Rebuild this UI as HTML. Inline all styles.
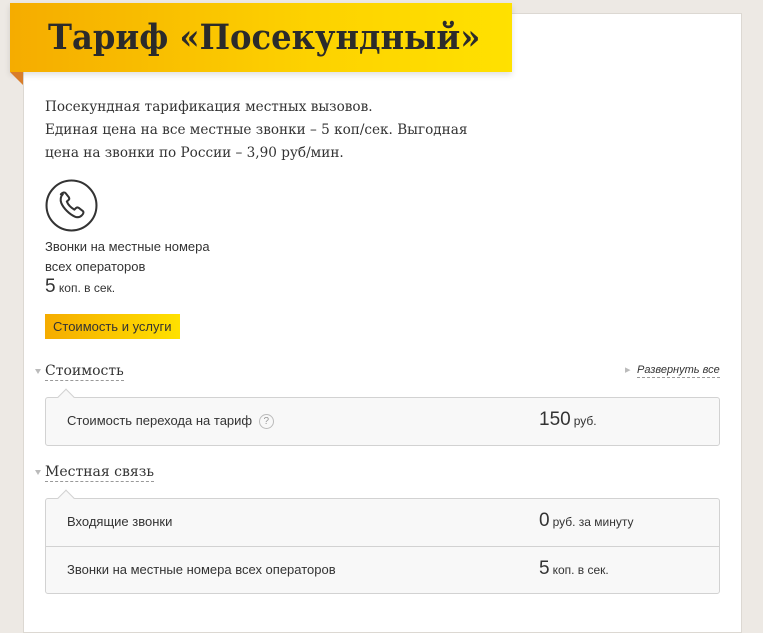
<!DOCTYPE html>
<html><head><meta charset="utf-8"><style>
*{margin:0;padding:0;box-sizing:border-box}
body{width:763px;height:610px;overflow:hidden;background:#ede9e4;font-family:"Liberation Sans",sans-serif;color:#333;position:relative}
.card{position:absolute;left:23px;top:13px;width:719px;height:620px;background:#fff;border:1px solid #dcd8d2}
.banner{position:absolute;left:10px;top:3px;width:502px;height:69px;background:linear-gradient(90deg,#f5ac00,#fdd200 60%,#ffe100);box-shadow:0 3px 6px rgba(0,0,0,.12)}
.banner h1{font-family:"DejaVu Serif","Liberation Serif",serif;font-weight:bold;font-size:35px;color:#2b2b2b;position:absolute;left:38px;top:14px;white-space:nowrap;transform:scaleX(.92);transform-origin:0 0}
.fold{position:absolute;left:10px;top:72px;width:0;height:0;border-top:13px solid #d87d2a;border-left:13px solid transparent}
.desc{position:absolute;left:45px;top:96px;line-height:23px;color:#333;font-family:"DejaVu Serif",serif;font-size:13.6px}
.icon{position:absolute;left:45px;top:179px}
.t{position:absolute;font-size:13px;color:#333}
.btn{position:absolute;left:45px;top:314px;width:135px;height:25px;background:linear-gradient(90deg,#f5ac00,#ffe100);font-size:13px;line-height:25px;padding-left:8px;color:#333}
.h{position:absolute;font-family:"DejaVu Serif",serif;font-size:14px;color:#333;border-bottom:1px dashed #999;line-height:18px}
.tri{position:absolute;width:0;height:0;border-left:3.5px solid transparent;border-right:3.5px solid transparent;border-top:5px solid #bbb}
.box{position:absolute;left:45px;width:675px;background:#f8f8f8;border:1px solid #d2d2d2;border-radius:3px}
.row{position:relative;height:47px;font-size:13px}
.row+.row{border-top:1px solid #d2d2d2}
.row .l{position:absolute;left:21px;top:15px}
.row .r{position:absolute;left:493px;top:11px;font-size:12px}
.row .r b{font-weight:normal;font-size:19px;font-family:"Liberation Sans",sans-serif;margin-right:3px}
.notch{position:absolute;top:-7px;left:14px;width:12px;height:12px;background:#f8f8f8;border-left:1px solid #d2d2d2;border-top:1px solid #d2d2d2;transform:rotate(45deg)}
</style></head><body>
<div class="card"></div>
<div class="banner"><h1>Тариф «Посекундный»</h1></div>
<div class="fold"></div>
<div class="desc">Посекундная тарификация местных вызовов.<br>Единая цена на все местные звонки – 5 коп/сек. Выгодная<br>цена на звонки по России – 3,90 руб/мин.</div>
<svg class="icon" width="53" height="53" viewBox="0 0 52 52"><circle cx="26" cy="26" r="24.5" fill="none" stroke="#333" stroke-width="2"/><path d="M15.5 15c2-2 3.8-2.2 4.8-1l3 3.8c.7 1 .6 2.1-.3 2.9l-1.6 1.4c1.2 3 4 6 7.4 8l1.5-1.5c.8-.8 2-.9 2.9-.2l3.8 2.9c1.2 1 .9 2.8-1 4.5-1.9 1.8-4 2.3-6.9 1-5.2-2.3-10.9-8-13.1-13.2-1.2-2.9-.7-6.7 1.5-8.6z" fill="none" stroke="#333" stroke-width="2" stroke-linejoin="round"/></svg>
<div class="t" style="left:45px;top:237px;line-height:20px">Звонки на местные номера<br>всех операторов</div>
<div class="t" style="left:45px;top:276px;font-size:12px"><span style="font-size:19px">5</span> коп. в сек.</div>
<div class="btn">Стоимость и услуги</div>
<div class="tri" style="left:35px;top:369px"></div>
<div class="h" style="left:45px;top:362px">Стоимость</div>
<div class="t" style="left:625px;top:363px;font-size:11px;color:#bbb">▸</div>
<div class="t" style="left:637px;top:363px;font-size:11px;font-style:italic;border-bottom:1px dashed #999;line-height:14px">Развернуть все</div>
<div class="box" style="top:397px"><div class="notch"></div><div class="row"><span class="l">Стоимость перехода на тариф <span style="display:inline-block;width:15px;height:15px;border:1px solid #bbb;border-radius:50%;font-size:10px;line-height:13px;text-align:center;color:#999;vertical-align:middle;margin-left:3px">?</span></span><span class="r"><b>150</b>руб.</span></div></div>
<div class="tri" style="left:35px;top:470px"></div>
<div class="h" style="left:45px;top:463px">Местная связь</div>
<div class="box" style="top:498px"><div class="notch"></div><div class="row"><span class="l">Входящие звонки</span><span class="r"><b>0</b>руб. за минуту</span></div><div class="row"><span class="l">Звонки на местные номера всех операторов</span><span class="r"><b>5</b>коп. в сек.</span></div></div>
</body></html>
